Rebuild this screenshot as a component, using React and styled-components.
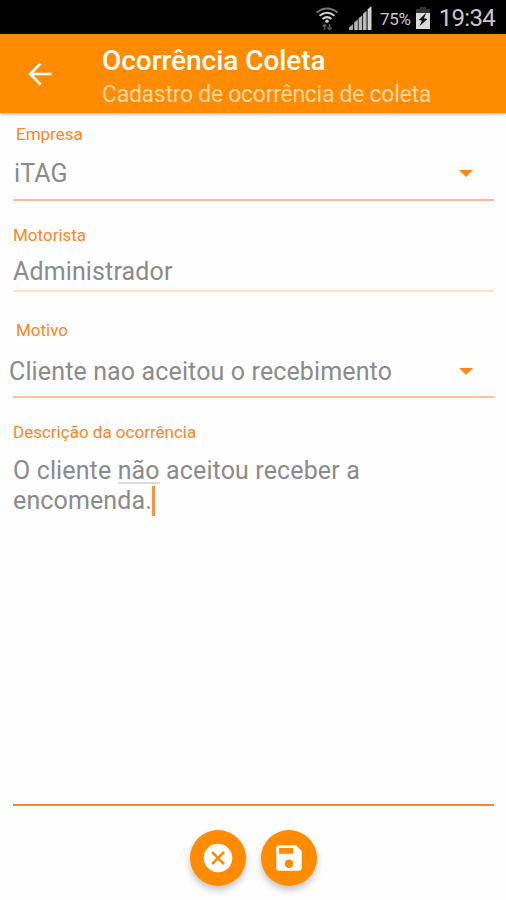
import React from 'react'
import styled, { createGlobalStyle } from 'styled-components';

const App = () => {
  return (
    <>
      <GlobalStyle />
      <Screen>
        <StatusBar>
          <WifiIcon />
          <SignalIcon />
          <Percent>75%</Percent>
          <BatteryIcon />
          <Clock>19:34</Clock>
        </StatusBar>
        <Header>
          <BackButton aria-label="Voltar">
            <svg width="24" height="24" viewBox="0 0 24 24" fill="none" stroke="#fff" strokeWidth="2.7">
              <path d="M23.5 12H2.5M12.7 1.4L2.2 12l10.5 10.6" />
            </svg>
          </BackButton>
          <div>
            <Title>Ocorrência Coleta</Title>
            <Subtitle>Cadastro de ocorrência de coleta</Subtitle>
          </div>
        </Header>
        <Form>
          <Field $top={11} $bottom={10} $line="#f9b8a0">
            <Label $indent={3}>Empresa</Label>
            <Value $gap={15} $indent={1}>iTAG<Caret /></Value>
          </Field>
          <Field $top={24} $bottom={3} $line="#ffe4c8">
            <Label>Motorista</Label>
            <Value $gap={12}>Administrador</Value>
          </Field>
          <Field $top={28} $bottom={9} $line="#ffbda3">
            <Label $indent={3}>Motivo</Label>
            <Value $gap={17} $indent={-4}>Cliente nao aceitou o recebimento<Caret /></Value>
          </Field>
          <DescriptionField $top={24} $bottom={0} $line="#fb8427">
            <Label>Descrição da ocorrência</Label>
            <Description>
              O cliente <Misspelled>não</Misspelled> aceitou receber a<br />
              encomenda.<Cursor />
            </Description>
          </DescriptionField>
        </Form>
        <Actions>
          <RoundButton aria-label="Cancelar">
            <svg width="30" height="30" viewBox="0 0 30 30">
              <circle cx="15" cy="15" r="14.3" fill="#fff" />
              <path d="M9 9l12 12M21 9L9 21" stroke="#ff8c00" strokeWidth="2.5" />
            </svg>
          </RoundButton>
          <RoundButton aria-label="Salvar">
            <svg width="34" height="34" viewBox="0 0 24 24" fill="#fff">
              <path d="M17 3H5c-1.11 0-2 .9-2 2v14c0 1.1.89 2 2 2h14c1.1 0 2-.9 2-2V7l-4-4zm-5 16c-1.66 0-3-1.34-3-3s1.34-3 3-3 3 1.34 3 3-1.34 3-3 3zm3-10H5V5h10v4z" />
            </svg>
          </RoundButton>
        </Actions>
      </Screen>
    </>
  )
}

const WifiIcon = () => (
  <svg width="24" height="25" viewBox="0 0 24 25" fill="none" stroke="#d0d0d0" strokeWidth="2">
    <path d="M1.5 6.5Q12-1.5 22.5 6.5" stroke="#777" />
    <path d="M4.5 9.8Q12 3.8 19.5 9.8" />
    <path d="M7.5 13Q12 9.2 16.5 13" />
    <circle cx="12" cy="15.2" r="1.8" fill="#d0d0d0" stroke="none" />
    <path d="M9.5 24v-5.5M7.5 20.5l2-2 2 2M14.5 18v5.5M12.5 21.5l2 2 2-2" stroke="#555" strokeWidth="1.6" />
  </svg>
)

const SignalIcon = () => (
  <svg width="23" height="24" viewBox="0 0 23 24">
    <path d="M0 24v-2.5L4 18v6z" fill="#a8a8a8" />
    <path d="M5.2 24v-7.5l3.6-3V24z" fill="#b8b8b8" />
    <path d="M9.6 24V12.2l3.6-3V24z" fill="#b8b8b8" />
    <path d="M14 24V7.8l3.6-3V24z" fill="#b8b8b8" />
    <path d="M18.6 24V3.2L22.5 0v24z" fill="#d2d2d2" />
  </svg>
)

const BatteryIcon = () => (
  <svg width="14" height="22" viewBox="0 0 14 22">
    <path d="M4 0h6v2h4v5H0V2h4z" fill="#333" />
    <path d="M0 6h14v16H0z" fill="#dadada" />
    <path d="M10.5 5.5L2.8 13l3.2.8-2.6 5.4L11.5 12l-3.6-.8z" fill="#111" />
  </svg>
)

export default App

const GlobalStyle = createGlobalStyle`
  * {
    box-sizing: border-box;
  }
  body {
    margin: 0;
    background: #fefefe;
    font-family: Roboto, sans-serif;
  }
`;

const Screen = styled.div`
  display: flex;
  flex-direction: column;
  width: 506px;
  height: 900px;
  overflow: hidden;
  background: #fefefe;
`;

const StatusBar = styled.div`
  display: flex;
  align-items: center;
  justify-content: flex-end;
  flex: none;
  height: 34px;
  padding: 2px 11px 0 0;
  background: #000;
  color: #c8c8c8;

  svg + svg {
    margin-left: 10px;
  }
`;

const Percent = styled.span`
  margin: 2px 5px 0 8px;
  font-size: 17px;
  letter-spacing: -0.3px;
`;

const Clock = styled.span`
  margin-left: 9px;
  font-size: 24px;
  letter-spacing: -0.7px;
`;

const Header = styled.header`
  display: flex;
  flex: none;
  height: 79px;
  padding: 10px 0 0 28px;
  background: #ff8c00;
  box-shadow: 0 1px 4px rgba(40, 80, 100, 0.45);
`;

const BackButton = styled.button`
  display: flex;
  width: 74px;
  padding: 18px 0 0;
  border: none;
  background: none;
`;

const Title = styled.h1`
  margin: 0;
  color: #fff;
  font-size: 28px;
  font-weight: 500;
  letter-spacing: -0.05px;
  line-height: 33px;
`;

const Subtitle = styled.p`
  margin: 0;
  color: #ffd5a0;
  font-size: 23px;
  letter-spacing: -0.28px;
  line-height: 36px;
`;

const Form = styled.main`
  padding: 0 12px 0 13px;
`;

const Field = styled.div`
  padding-top: ${({ $top }) => $top}px;
  padding-bottom: ${({ $bottom }) => $bottom}px;
  border-bottom: 2px solid ${({ $line }) => $line};
`;

const DescriptionField = styled(Field)`
  height: 408px;
`;

const Label = styled.div`
  margin-left: ${({ $indent = 0 }) => $indent}px;
  color: #ff8526;
  font-size: 17px;
  line-height: 20px;
`;

const Value = styled.div`
  display: flex;
  align-items: center;
  justify-content: space-between;
  margin-top: ${({ $gap }) => $gap}px;
  margin-left: ${({ $indent = 0 }) => $indent}px;
  padding-right: 21px;
  color: #8b8b8b;
  font-size: 25px;
  letter-spacing: 0.13px;
  line-height: 30px;
  white-space: nowrap;
`;

const Caret = styled.span`
  margin-top: -2px;
  border-top: 7px solid #ff8719;
  border-left: 7px solid transparent;
  border-right: 7px solid transparent;
`;

const Description = styled.div`
  margin-top: 14px;
  color: #8b8b8b;
  font-size: 25px;
  letter-spacing: 0.13px;
  line-height: 29.5px;
  white-space: nowrap;
`;

const Misspelled = styled.span`
  background: linear-gradient(#dcdcdc, #dcdcdc) left bottom 1px / 100% 2px no-repeat;
`;

const Cursor = styled.span`
  display: inline-block;
  width: 3px;
  height: 30px;
  margin: -4px 0 -7px 0;
  background: #fb9145;
  vertical-align: baseline;
`;

const Actions = styled.footer`
  display: flex;
  gap: 15px;
  padding: 24px 0 0 190px;
`;

const RoundButton = styled.button`
  display: flex;
  align-items: center;
  justify-content: center;
  width: 56px;
  height: 56px;
  padding: 0;
  border: none;
  border-radius: 50%;
  background: #ff8c00;
  box-shadow: 0 4px 7px rgba(0, 0, 0, 0.24);
`;
